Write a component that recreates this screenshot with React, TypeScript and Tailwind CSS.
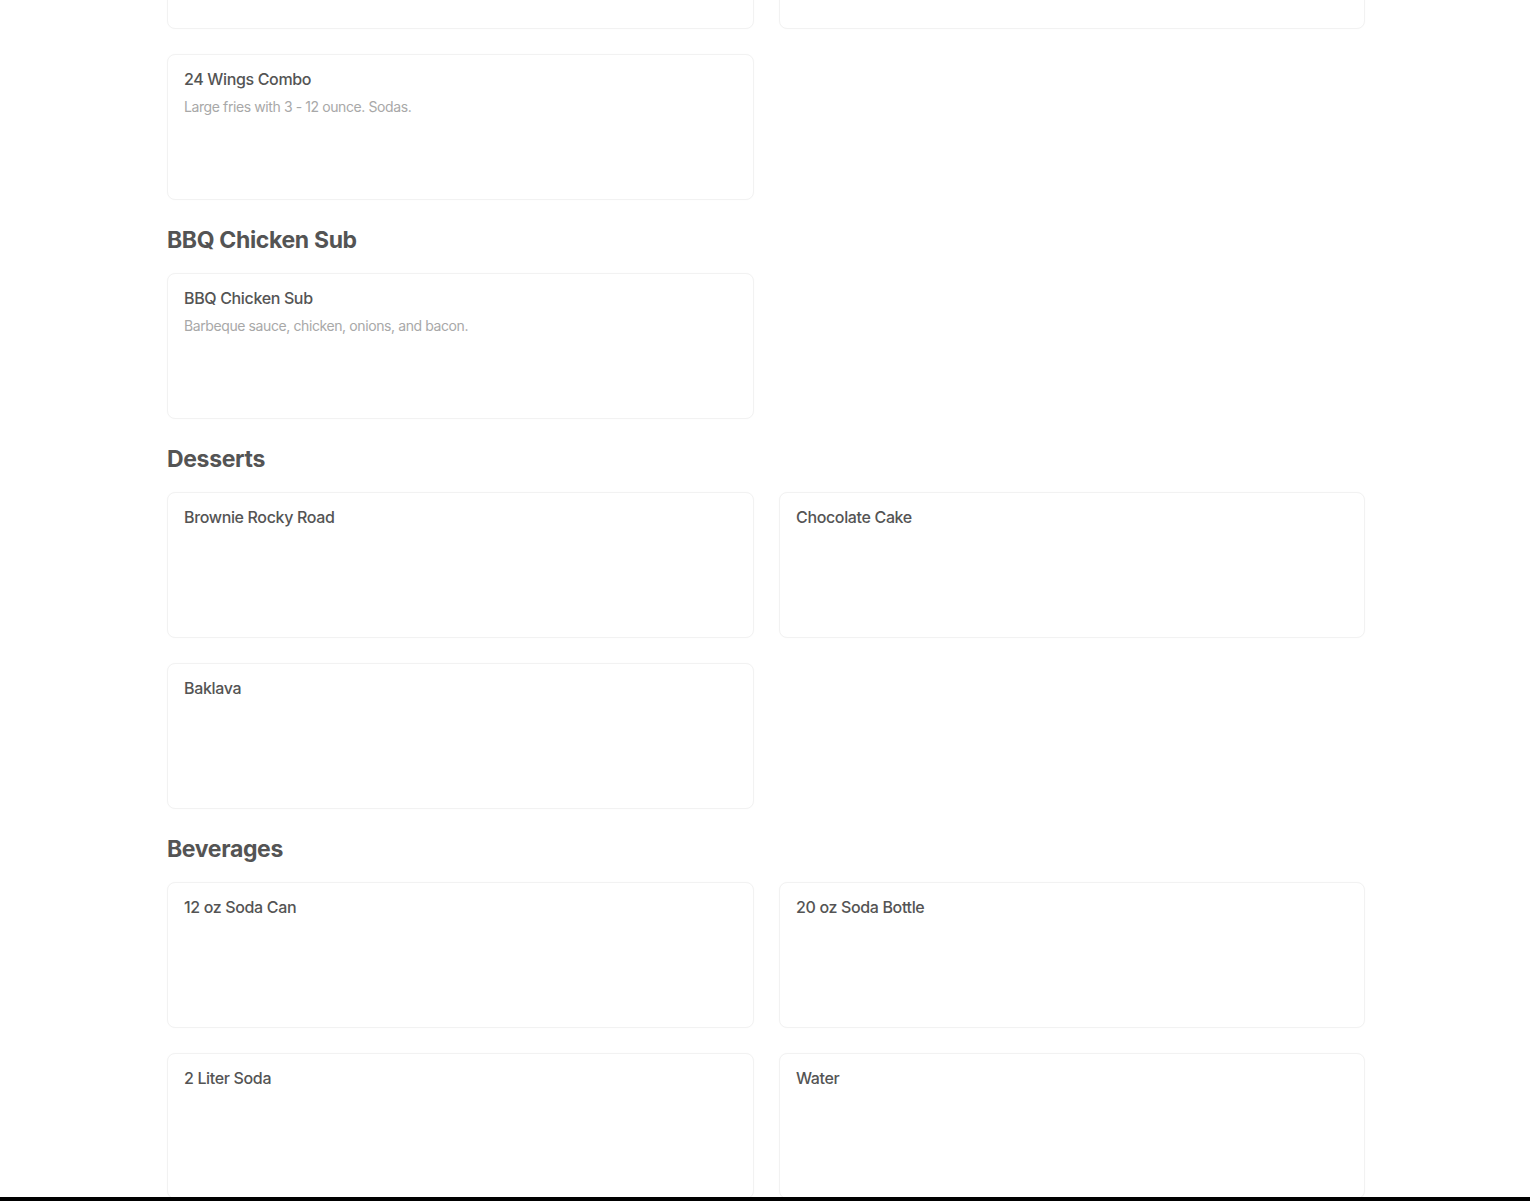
import React from "react";

type Item = { title: string; desc?: string };
type Section = { heading?: string; items: Item[] };

const sections: Section[] = [
  {
    items: [
      { title: "" },
      { title: "" },
      { title: "24 Wings Combo", desc: "Large fries with 3 - 12 ounce. Sodas." },
    ],
  },
  {
    heading: "BBQ Chicken Sub",
    items: [{ title: "BBQ Chicken Sub", desc: "Barbeque sauce, chicken, onions, and bacon." }],
  },
  {
    heading: "Desserts",
    items: [{ title: "Brownie Rocky Road" }, { title: "Chocolate Cake" }, { title: "Baklava" }],
  },
  {
    heading: "Beverages",
    items: [
      { title: "12 oz Soda Can" },
      { title: "20 oz Soda Bottle" },
      { title: "2 Liter Soda" },
      { title: "Water" },
    ],
  },
];

function Card({ item }: { item: Item }) {
  return (
    <div className="h-[146px] rounded-lg border border-[#f2f2f2] bg-white px-4 pt-3 shadow-[0_0_2px_rgba(0,0,0,0.02)]">
      {item.title && (
        <div className="text-[16px] leading-[24px] font-medium tracking-[-0.35px] text-[#545454]">
          {item.title}
        </div>
      )}
      {item.desc && (
        <div className="mt-[6px] text-[14px] leading-[20px] tracking-[-0.4px] text-[#a8a8a8]">
          {item.desc}
        </div>
      )}
    </div>
  );
}

export default function App() {
  return (
    <div
      className="min-h-screen overflow-hidden bg-white"
      style={{ fontFamily: "Inter, 'Noto Sans', sans-serif" }}
    >
      <div className="mx-auto mt-[-117px] w-[1200px] pb-10 pl-[2px]">
        {sections.map((s, i) => (
          <div key={i}>
            {s.heading && (
              <h2 className="mt-[26px] mb-[19px] text-[23px] leading-[28px] font-bold tracking-[-0.35px] text-[#545454]">
                {s.heading}
              </h2>
            )}
            <div className="grid grid-cols-[587px_586px] gap-x-[25px] gap-y-[25px]">
              {s.items.map((it, j) => (
                <Card key={j} item={it} />
              ))}
            </div>
          </div>
        ))}
      </div>
      <div className="fixed bottom-0 left-0 right-0 h-[4px] bg-black" />
    </div>
  );
}
